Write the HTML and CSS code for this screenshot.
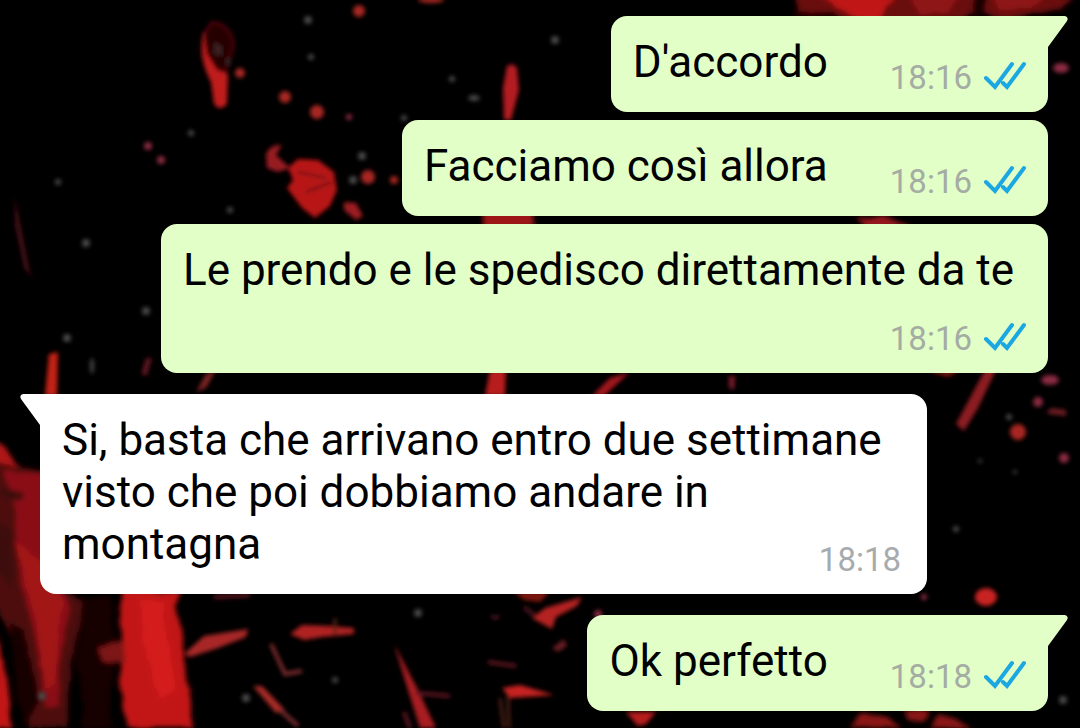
FILE: index.html
```
<!DOCTYPE html>
<html lang="it">
<head>
    <meta charset="UTF-8">
    <meta name="viewport" content="width=device-width, initial-scale=1.0">
    <title>Chat</title>
    <link rel="stylesheet" href="styles.css">
</head>
<body>
    <svg class="wallpaper" viewBox="0 0 1080 728" preserveAspectRatio="xMidYMid slice" aria-hidden="true">
        <defs>
            <filter id="soft" x="-20%" y="-20%" width="140%" height="140%"><feGaussianBlur stdDeviation="2"/></filter>
            <filter id="rough" x="-10%" y="-10%" width="120%" height="120%">
                <feTurbulence type="fractalNoise" baseFrequency="0.04" numOctaves="2" seed="4"/>
                <feDisplacementMap in="SourceGraphic" scale="8" xChannelSelector="R" yChannelSelector="G"/>
                <feGaussianBlur stdDeviation="2.6"/>
            </filter>
        </defs>
        <rect width="1080" height="728" fill="#000"/>
        <!-- large smears -->
        <g filter="url(#rough)">
            <path fill="#4d0a0d" d="M-8 440L22 466L60 474L60 590L84 600L74 650L66 728L30 728L14 640L-8 600Z"/>
            <path fill="#8a1115" d="M4 470L60 476L60 590L70 610L62 650L58 706L46 706L36 640L18 570L16 510Z"/>
            <path fill="#b01519" d="M-8 440L4 446L20 466L-8 462Z"/>
            <path fill="#a31518" d="M14 540L40 560L62 604L56 680L46 690L36 620Z"/>
            <path fill="#3c0709" d="M4 486L26 494L20 500L-4 494ZM-4 520L12 530L12 590L-4 570Z"/>
            <path fill="#150304" d="M10 620L24 630L40 700L22 728L16 690ZM84 596L112 596L116 640L110 728L84 728L76 660Z"/>
            <path fill="#c21619" d="M122 590L180 590L176 606L184 642L188 690L194 728L128 728L120 680Z"/>
            <path fill="#d41c1c" d="M138 600L162 600L168 640L176 690L162 700L146 660Z"/>
            <path fill="#c21619" d="M-6 630L4 660L12 728L-6 728Z"/>
            <path fill="#7d1417" d="M98 648L124 640L124 664L104 662Z"/>
            <path fill="#690c10" d="M792 -6L1076 -6L1062 8L1030 16L1000 20L980 10L960 20L806 20Z"/>
            <path fill="#c01718" d="M820 -6L898 -6L884 10L878 24L856 20L836 8Z"/>
            <path fill="#8f1216" d="M906 -6L960 -6L950 12L920 14ZM990 -6L1050 -6L1030 10L1000 10Z"/>
            <path fill="#160203" d="M974 -6L988 -6L984 20L974 20ZM794 10L830 12L840 20L796 20Z"/>
            <path fill="#9c1714" d="M482 210L534 208L536 228L482 228Z"/>
            <path fill="#96181a" d="M856 218L884 216L918 230L868 228Z"/>
            <path fill="#8c1812" d="M850 728L862 714L884 716L902 728ZM904 710L930 712L926 722L908 720ZM930 728L940 716L974 728Z"/>
        </g>
        <!-- splashes -->
        <g filter="url(#soft)">
            <path fill="#260405" stroke="#5a0f12" stroke-width="2" d="M212 22Q200 36 202 56Q206 74 214 84L224 78L234 46Q232 24 212 22Z"/>
            <path fill="#3a2022" d="M214 42L222 46L222 56L214 54ZM226 58L231 58L230 66L226 64Z"/>
            <path fill="#c01a1b" d="M203 30Q200 60 211 82L214 104Q220 112 227 104L228 74L217 70L207 54Z"/>
            <path fill="#971a24" d="M266 154Q270 144 282 145L276 155L290 168L278 172L267 168Z"/>
            <path fill="#b81418" d="M288 168L298 159L318 160L334 172L337 190L330 206L315 218L302 208L287 188L293 180Z"/>
            <path stroke="#5a080c" stroke-width="2" fill="none" d="M298 172L326 178M306 192L332 182"/>
            <path fill="#b41c22" d="M507 66Q513 62 517 68L519 90L511 120L504 120L503 88Z"/>
            <path fill="#9c1c24" d="M344 202L356 203L363 216L356 220L344 210Z"/>
            <path fill="#3c0f15" d="M14 196L18 212L29 266L32 278L24 268L15 226Z"/>
            <path fill="#c32418" d="M49 354L58 352L57 396L45 396Z"/>
            <path fill="#5c1420" d="M146 358L152 358L147 376L141 374Z"/>
            <path fill="#7c2022" d="M196 392L206 374L216 370L206 388Z"/>
            <path fill="#b81a1c" d="M490 370L506 370L505 396L485 396Z"/>
            <path fill="#a3191f" d="M592 396L610 378L630 372L604 396Z"/>
            <path fill="#7c1a2a" d="M729 376L735 376L734 390L729 388Z"/>
            <path fill="#8c1c20" d="M986 368L996 370L978 408L964 431L956 424Z"/>
            <path fill="#7c140e" d="M926 370L960 370L948 377Z"/>
            <path fill="#a82626" d="M184 654L204 636L248 629L246 637L218 648L190 657Z"/>
            <path fill="#b02420" d="M290 634L302 625L330 626L354 628L354 634L322 637L304 640Z"/>
            <path fill="#a82a28" d="M253 686L262 686L285 710L276 713Z"/>
            <path stroke="#7c2c2e" stroke-width="4" fill="none" d="M271 644L285 674L302 671M280 710L298 726"/>
            <path fill="#a81e20" d="M394 644L418 690L436 728L420 728L408 690Z"/>
            <path stroke="#5d1822" stroke-width="4" fill="none" d="M416 693L450 696M488 662L516 666M404 712L410 728M214 597L250 595"/>
            <path fill="#c82420" d="M502 688L520 685L554 695L510 698Z"/>
            <path stroke="#522014" stroke-width="3" fill="none" d="M508 696L509 728M500 698L504 728M335 618L335 634"/>
            <path fill="#b52420" d="M532 618L545 608L582 597L577 606L556 617L552 629Z"/>
            <path fill="#4b1822" d="M522 608L532 616L536 614L526 606ZM488 616L502 615L496 620Z"/>
            <path fill="#671b20" d="M552 648L564 639L567 646L558 652Z"/>
            <path fill="#7e140c" d="M514 592L550 592L540 602L524 600Z"/>
            <path fill="#b81f1c" d="M626 712L656 712L646 724L638 726Z"/>
            <path fill="#701f24" d="M1046 412L1052 408L1066 410L1066 416L1050 414Z"/>
        </g>
        <!-- droplets -->
        <g filter="url(#soft)">
            <g fill="#a82822">
                <circle cx="359" cy="11" r="6"/><circle cx="240" cy="73" r="5"/><circle cx="285" cy="97" r="6"/>
                <circle cx="317" cy="112" r="7"/><circle cx="368" cy="177" r="7"/><circle cx="394" cy="180" r="4"/>
                <circle cx="1018" cy="432" r="8"/><ellipse cx="986" cy="597" rx="11" ry="9" fill="#c92420"/>
                <ellipse cx="431" cy="0" rx="13" ry="3"/>
            </g>
            <g fill="#8c2c42">
                <ellipse cx="1061" cy="68" rx="8" ry="5"/><ellipse cx="1050" cy="380" rx="9" ry="5"/>
                <circle cx="1038" cy="402" r="5"/><circle cx="1064" cy="458" r="5"/>
                <circle cx="148" cy="146" r="4"/><circle cx="161" cy="160" r="4"/>
                <circle cx="349" cy="117" r="3"/><circle cx="598" cy="614" r="4"/><circle cx="924" cy="597" r="3"/>
            </g>
            <g fill="#484848">
                <circle cx="308" cy="20" r="4"/><circle cx="311" cy="57" r="3"/><circle cx="191" cy="133" r="3"/>
                <circle cx="58" cy="182" r="3"/><circle cx="230" cy="210" r="3"/><circle cx="362" cy="156" r="4"/>
                <circle cx="353" cy="180" r="4"/><circle cx="555" cy="40" r="4"/><circle cx="452" cy="79" r="3"/>
                <ellipse cx="474" cy="98" rx="6" ry="3"/><circle cx="404" cy="118" r="3"/><circle cx="86" cy="243" r="4"/>
                <circle cx="146" cy="311" r="4"/><circle cx="67" cy="338" r="4"/><ellipse cx="92" cy="366" rx="2" ry="8"/>
                <circle cx="956" cy="529" r="3"/><circle cx="980" cy="461" r="2"/><circle cx="1009" cy="417" r="3"/>
                <circle cx="1015" cy="472" r="2"/><circle cx="418" cy="613" r="4"/><circle cx="246" cy="698" r="4"/>
                <circle cx="335" cy="680" r="3"/><circle cx="1063" cy="700" r="4"/><circle cx="42" cy="696" r="4"/>
            </g>
        </g>
    </svg>

    <svg class="sprite" aria-hidden="true">
        <symbol id="ticks" viewBox="0 0 42 30">
            <path d="M2 17L11 26L28 3M19 22L23 26L40 3"/>
        </symbol>
        <symbol id="tail" viewBox="0 0 22 34">
            <path d="M0 0H19Q23 1 21 5L2 31V34H0Z"/>
        </symbol>
    </svg>

    <main class="chat">
        <div class="bubble sent first">
            <svg class="tail"><use href="#tail"/></svg>
            <p class="text">D'accordo</p>
            <div class="meta"><time>18:16</time><svg class="ticks"><use href="#ticks"/></svg></div>
        </div>
        <div class="bubble sent">
            <p class="text">Facciamo così allora</p>
            <div class="meta"><time>18:16</time><svg class="ticks"><use href="#ticks"/></svg></div>
        </div>
        <div class="bubble sent">
            <p class="text">Le prendo e le spedisco direttamente da te</p>
            <div class="meta"><time>18:16</time><svg class="ticks"><use href="#ticks"/></svg></div>
        </div>
        <div class="bubble received first">
            <svg class="tail"><use href="#tail"/></svg>
            <p class="text">Si, basta che arrivano entro due settimane visto che poi dobbiamo andare in montagna</p>
            <div class="meta"><time>18:18</time></div>
        </div>
        <div class="bubble sent first">
            <svg class="tail"><use href="#tail"/></svg>
            <p class="text">Ok perfetto</p>
            <div class="meta"><time>18:18</time><svg class="ticks"><use href="#ticks"/></svg></div>
        </div>
    </main>
</body>
</html>
```
FILE: styles.css
```
body {
    margin: 0;
    background-color: #000;
    font-family: Roboto, "Liberation Sans", sans-serif;
}
.wallpaper {
    position: fixed;
    top: 0;
    left: 0;
    width: 100%;
    height: 100%;
}
.sprite {
    position: absolute;
    width: 0;
    height: 0;
}
.chat {
    position: relative;
    display: flex;
    flex-direction: column;
    gap: 8px;
    padding: 16px 32px 16px 40px;
}
.bubble {
    position: relative;
    display: flex;
    flex-wrap: wrap;
    justify-content: flex-end;
    align-items: flex-end;
    column-gap: 62px;
    row-gap: 13px;
    box-sizing: border-box;
    max-width: 88%;
    padding: 20px 22px 14px 22px;
    border-radius: 16px;
}
.sent {
    align-self: flex-end;
    background-color: #e1ffc7;
}
.sent.first {
    border-top-right-radius: 0;
}
.received {
    align-self: flex-start;
    row-gap: 0;
    margin: 13px 0;
    background-color: #fff;
    border-top-left-radius: 0;
}
.text {
    flex-grow: 1;
    margin: 0;
    padding-bottom: 10px;
    font-size: 44px;
    line-height: 52px;
    color: #000;
}
.meta {
    display: flex;
    align-items: center;
    gap: 12px;
    font-size: 33px;
    line-height: 40px;
    color: #a5aca3;
}
/* the time sits beside the last line of the text */
.received .meta {
    margin-top: -40px;
    padding-right: 4px;
    color: #a8abae;
}
.ticks {
    width: 42px;
    height: 30px;
    margin-bottom: 4px;
    fill: none;
    stroke: #1ba7e2;
    stroke-width: 4;
    stroke-linecap: round;
}
.tail {
    position: absolute;
    top: 0;
    left: 100%;
    width: 22px;
    height: 34px;
    margin-left: -2px;
    fill: #e1ffc7;
}
.received .tail {
    left: auto;
    right: 100%;
    margin: 0 -2px 0 0;
    fill: #fff;
    transform: scaleX(-1);
}
```
